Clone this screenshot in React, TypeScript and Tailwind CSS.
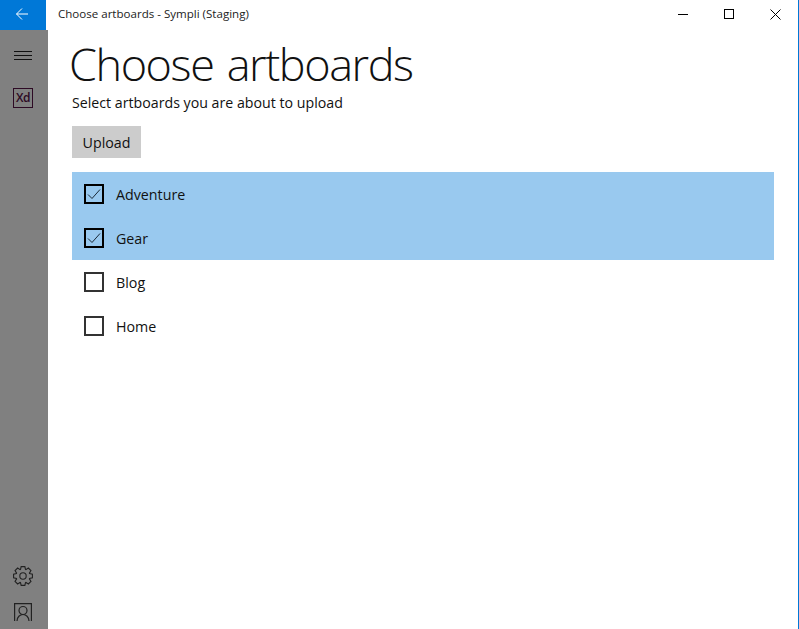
import React from "react";

const font = { fontFamily: '"Open Sans","Noto Sans",sans-serif' };

function gearPath() {
  const c = 10;
  const teeth = 8;
  const ro = 9.6;
  const ri = 7;
  const pts: string[] = [];
  for (let i = 0; i < teeth; i++) {
    const a = (i * 2 * Math.PI) / teeth;
    const w = 0.26;
    const g = 0.36;
    const list: [number, number][] = [
      [ri, a - g],
      [ro, a - w * 0.75],
      [ro, a + w * 0.75],
      [ri, a + g],
    ];
    for (const [r, t] of list) {
      pts.push(`${(c + r * Math.sin(t)).toFixed(2)} ${(c - r * Math.cos(t)).toFixed(2)}`);
    }
  }
  return "M" + pts.join(" L") + " Z";
}

function Row({ label, checked }: { label: string; checked: boolean }) {
  return (
    <div className={`flex h-11 items-center pl-3 ${checked ? "bg-[#99c9ef]" : ""}`}>
      <div className={`flex h-5 w-5 items-center justify-center border-2 ${checked ? "border-black" : "border-[#333333]"}`}>
        {checked && (
          <svg width="16" height="16" viewBox="0 0 16 16" fill="none" stroke="#1a2a38" strokeWidth="1">
            <path d="M2 8.5 L6 12.5 L14 3.5" />
          </svg>
        )}
      </div>
      <span className="ml-3 pt-[2px] text-[14.25px] leading-5 text-[#111]">{label}</span>
    </div>
  );
}

export default function App() {
  return (
    <div className="flex h-[629px] w-[799px] flex-col overflow-hidden border-r border-[#0078d7] bg-white" style={font}>
      <div className="flex h-[30px] shrink-0 items-center">
        <div className="flex h-[30px] w-[46px] items-center justify-center bg-[#0078d7] pr-[2px] pb-[2px]">
          <svg width="14" height="14" viewBox="0 0 14 14" fill="none" stroke="white" strokeWidth="1">
            <path d="M13 7 H1.5 M7 1.5 L1.5 7 L7 12.5" />
          </svg>
        </div>
        <span className="ml-3 pb-[2px] text-[11.55px] text-[#222]">Choose artboards - Sympli (Staging)</span>
        <div className="ml-auto flex items-center pb-[2px]">
          <div className="flex w-[46px] justify-center">
            <div className="h-px w-[10px] bg-black" />
          </div>
          <div className="flex w-[46px] justify-center">
            <div className="h-[10px] w-[10px] border border-black" />
          </div>
          <div className="flex w-[46px] justify-center">
            <svg width="11" height="11" viewBox="0 0 11 11" fill="none" stroke="black" strokeWidth="1">
              <path d="M0.5 0.5 L10.5 10.5 M10.5 0.5 L0.5 10.5" />
            </svg>
          </div>
        </div>
      </div>
      <div className="flex min-h-0 flex-1">
        <div className="flex w-12 shrink-0 flex-col items-center bg-[#808080]">
          <svg className="mt-[20px] mr-[2px]" width="20" height="12" viewBox="0 0 20 12" stroke="#111" strokeWidth="1">
            <path d="M1 1.5 H19 M1 5.5 H19 M1 9.5 H19" />
          </svg>
          <div className="mt-[26px] mr-[2px] flex h-5 w-5 items-center justify-center border border-[#2d0a24] text-[12px] leading-none font-semibold tracking-[-0.5px] text-[#2d0a24]">
            Xd
          </div>
          <div className="mt-auto mr-[2px] flex flex-col items-center">
            <svg width="20" height="20" viewBox="0 0 20 20" fill="none" stroke="#222" strokeWidth="1.1">
              <circle cx="10" cy="10" r="3.2" />
              <path d={gearPath()} />
            </svg>
            <svg className="mt-[17px] mb-[8px]" width="18" height="18" viewBox="0 0 18 18" fill="none" stroke="#222" strokeWidth="1.2">
              <path d="M0.6 18 V0.6 H17.4 V18" />
              <circle cx="9" cy="7.5" r="4" />
              <path d="M3 18 C3 14 6 11.5 9 11.5 C12 11.5 15 14 15 18" />
            </svg>
          </div>
        </div>
        <div className="min-w-0 flex-1 pr-6 pl-6">
          <h1 className="mt-[4px] -ml-[3px] text-[45px] leading-[60px] font-light tracking-[-1.42px] text-[#111] [word-spacing:3px]">Choose artboards</h1>
          <p className="-mt-px text-[14.2px] leading-5 text-[#111]">Select artboards you are about to upload</p>
          <div className="mt-[13px] flex h-8 w-[69px] items-center justify-center bg-[#cccccc] pt-[2px] text-[14.25px] text-[#111]">Upload</div>
          <div className="mt-[14px]">
            <Row label="Adventure" checked />
            <Row label="Gear" checked />
            <Row label="Blog" checked={false} />
            <Row label="Home" checked={false} />
          </div>
        </div>
      </div>
    </div>
  );
}
